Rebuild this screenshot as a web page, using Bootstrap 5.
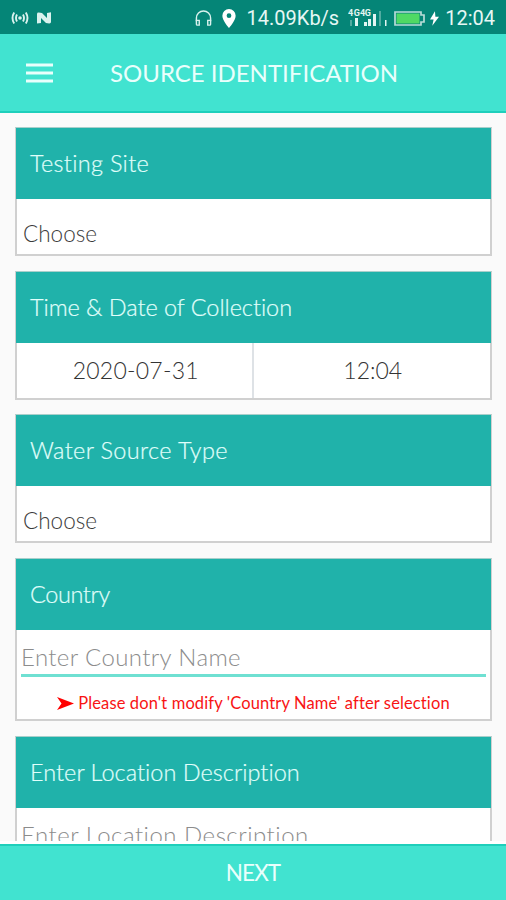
<!DOCTYPE html>
<html lang="en">
<head>
<meta charset="utf-8">
<meta name="viewport" content="width=device-width, initial-scale=1">
<title>Source Identification</title>
<link href="https://cdn.jsdelivr.net/npm/bootstrap@5.3.0/dist/css/bootstrap.min.css" rel="stylesheet">
<style>
body{font-family:Lato,"Open Sans",sans-serif;background:#fafafa;height:900px;line-height:1;font-variant-ligatures:none}
.statusbar{height:34px;background:#058577;font-family:Roboto,sans-serif;font-size:20px;color:#e6f7f4;padding:2px 11px 0 11px}
.speed{margin:0 9px 0 11px}
.pin{margin-left:10px}
.battery{margin:0 5px 0 6px}
.clock{margin-left:6px}
.appbar{height:79px;background:#41e3d0;border-bottom:2px solid #1fcfbb;padding-left:26px}
.appbar h1{font-size:24px;font-weight:400;margin:2px 0 0 57px;white-space:nowrap;color:#e9fffc}
.form-area{padding:14px 14px 0 15px;height:728px}
.panel{border:2px solid #d0d0d0;border-top-color:#a9cfcb;border-radius:0;height:129px;margin-bottom:15px}
.panel-dates{margin-bottom:14px}
.panel-country{height:163px}
.panel-title{height:71px;background:#20b2aa;color:#e0fffb;font-size:23.5px;font-weight:300;-webkit-text-stroke:.2px #e0fffb;margin:-1px -1px 0;padding:0 14px;white-space:nowrap;flex:none}
.value{font-weight:300;font-size:23px;color:#333;white-space:nowrap}
.choice{font-size:22.5px;color:#3c3c3c;letter-spacing:0;padding:24px 6px 0}
.stamp{letter-spacing:.25px;padding-left:3px}
.stamp-time{padding-left:2px}
.hint{color:#8c8c8c;font-size:24px;font-weight:300;white-space:nowrap;letter-spacing:.38px;margin:0 4px;padding:15px 0 0}
.hint-location{letter-spacing:.5px}
.underlined{border-bottom:3px solid #6fe0d2;height:47px}
.note{color:#f81414;font-size:16.5px;white-space:nowrap;letter-spacing:.12px;margin-top:18px}
.next{height:56px;background:#41e3d0;border:0;border-top:2px solid #1fcfbb;border-radius:0;color:#e9fffc;font-size:22.5px;font-weight:400;letter-spacing:-.9px}
.gapline{height:3px;background:#fff}
.ls-a{letter-spacing:.3px}
.ls-b{letter-spacing:-.05px}
.ls-c{letter-spacing:.35px}
.ls-d{letter-spacing:-.4px}
.ls-e{letter-spacing:.03px}
</style>
</head>
<body class="d-flex flex-column overflow-hidden">
<div class="statusbar d-flex align-items-center flex-shrink-0">
  <svg width="18" height="14" viewBox="0 0 18 14" fill="none" stroke="#d9f2ee" stroke-width="1.9"><circle cx="9" cy="7" r="1.8" fill="#d9f2ee" stroke="none"/><path d="M6 3.500Q4 7 6 10.500M3.200 1.500Q-.2 7 3.200 12.500M12 3.500Q14 7 12 10.500M14.800 1.500Q18.200 7 14.800 12.500"/></svg>
  <svg class="ms-2" width="14" height="12" viewBox="0 0 14 12"><path d="M0 11.500V2Q0 .5 1.800.6L5 1l5 5V1l4-.8V10q0 1.500-1.800 1.400L9 11 4 6v5z" fill="#d9f2ee"/></svg>
  <svg class="ms-auto" width="17" height="17" viewBox="0 0 18 18" fill="none" stroke="#d9f2ee" stroke-width="1.500"><path d="M1.500 12V8.500a7.500 7.500 0 0 1 15 0V12"/><path d="M1.500 11h3v5h-2q-1 0-1-1zM16.500 11h-3v5h2q1 0 1-1z"/></svg>
  <svg class="pin" width="14" height="19" viewBox="0 0 14 20"><path fill-rule="evenodd" d="M7 0a7 7 0 0 1 7 7c0 5-7 13-7 13S0 12 0 7a7 7 0 0 1 7-7m0 4.500a2.500 2.500 0 1 0 0 5 2.500 2.500 0 0 0 0-5" fill="#fff"/></svg>
  <span class="speed">14.09Kb/s</span>
  <svg width="40" height="18" viewBox="0 0 40 18" fill="#e3f5f2"><g font-size="9" font-weight="700" font-family="Roboto"><text x="0" y="7" textLength="12">4G</text><text x="12" y="7" textLength="11">4G</text></g><path d="M7 9h3v8H7zM16 13h3v4h-3zM20 10h3v7h-3zM25 5h3v12h-3zM37 11h1.500v6H37z"/><path d="M2 11h2v6H2zM31 2h2v15h-2z" opacity=".35"/></svg>
  <svg class="battery" width="31" height="15" viewBox="0 0 31 15"><path d="M1 1h26v3h3v7h-3v3H1z" fill="none" stroke="#b9dcd8" stroke-width="1.700"/><path d="M2.500 2.500h23v10h-23z" fill="#4fd964"/></svg>
  <svg width="9" height="15" viewBox="0 0 10 16"><path d="M5.500 0 0 9h4L2.500 16 10 6H6z" fill="#fff"/></svg>
  <span class="clock">12:04</span>
</div>
<header class="appbar d-flex align-items-center flex-shrink-0">
  <svg width="27" height="20" viewBox="0 0 27 20"><path d="M0 2h27M0 10h27M0 18h27" stroke="#e9fffc" stroke-width="3.200"/></svg>
  <h1>SOURCE IDENTIFICATION</h1>
</header>
<main class="form-area overflow-hidden flex-shrink-0">
  <section class="panel card">
    <h2 class="panel-title d-flex align-items-center"><span class="ls-a">Testing Site</span></h2>
    <div class="value choice">Choose</div>
  </section>
  <section class="panel panel-dates card">
    <h2 class="panel-title d-flex align-items-center"><span class="ls-b">Time &amp; Date of Collection</span></h2>
    <div class="d-flex flex-grow-1">
      <div class="value stamp w-50 d-flex align-items-center justify-content-center border-end border-2">2020-07-31</div>
      <div class="value stamp-time w-50 d-flex align-items-center justify-content-center">12:04</div>
    </div>
  </section>
  <section class="panel card">
    <h2 class="panel-title d-flex align-items-center"><span class="ls-c">Water Source Type</span></h2>
    <div class="value choice">Choose</div>
  </section>
  <section class="panel panel-country card">
    <h2 class="panel-title d-flex align-items-center"><span class="ls-d">Country</span></h2>
    <div class="hint underlined">Enter Country Name</div>
    <div class="note d-flex align-items-center justify-content-center gap-1"><svg width="17" height="13" viewBox="0 0 17 13"><path d="M0 0 17 6.500 0 13 4.500 6.500z" fill="#f00"/></svg><span>Please don't modify 'Country Name' after selection</span></div>
  </section>
  <section class="panel card">
    <h2 class="panel-title d-flex align-items-center"><span class="ls-e">Enter Location Description</span></h2>
    <div class="hint hint-location">Enter Location Description</div>
  </section>
</main>
<div class="gapline flex-shrink-0"></div>
<button class="next btn w-100 flex-shrink-0">NEXT</button>
<script src="https://cdn.jsdelivr.net/npm/bootstrap@5.3.0/dist/js/bootstrap.bundle.min.js"></script>
</body>
</html>
